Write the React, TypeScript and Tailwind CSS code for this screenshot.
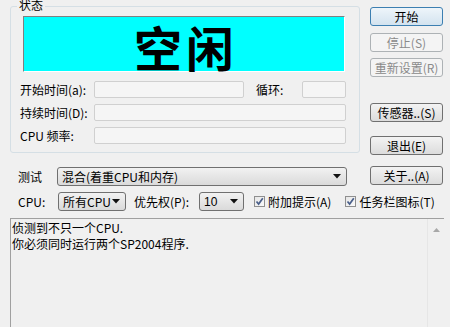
import React from "react";

const font = { fontFamily: "'Noto Sans CJK SC', 'Liberation Sans', sans-serif" };

function Btn({ children, disabled, primary }: { children: React.ReactNode; disabled?: boolean; primary?: boolean }) {
  const cls = disabled
    ? "border-[#adb2b5] text-[#8a8a8a] bg-[#f4f4f4]"
    : primary
    ? "border-[#3c7fb1] text-black bg-gradient-to-b from-[#eef5fa] to-[#d3e3ef]"
    : "border-[#707070] text-black bg-gradient-to-b from-[#f3f3f3] to-[#dcdcdc]";
  return (
    <div className={`w-[73px] h-[19px] border rounded-[3px] flex items-center justify-center text-[12px] leading-none ${cls}`}>
      {children}
    </div>
  );
}

function Combo({ w, children, sans }: { w: string; children: React.ReactNode; sans?: boolean }) {
  return (
    <div className={`${w} h-[19px] border border-[#707070] rounded-[3px] bg-gradient-to-b from-[#f2f2f2] to-[#dadada] flex items-center pl-[4px] pr-[5px]`}>
      <span className={`flex-1 text-[12px] leading-none whitespace-nowrap ${sans ? "font-['Liberation_Sans']" : ""}`}>{children}</span>
      <svg width="8" height="5" viewBox="0 0 8 5" className="shrink-0"><path d="M0 0H8L4 4.5Z" fill="#111" /></svg>
    </div>
  );
}

function Check({ label }: { label: string }) {
  return (
    <div className="flex items-center gap-[3px]">
      <div className="w-[11px] h-[11px] border border-[#8f8f8f] bg-gradient-to-br from-[#e6e6e6] to-[#fafafa] flex items-center justify-center">
        <svg width="9" height="9" viewBox="0 0 9 9"><path d="M1.5 4.5L3.6 7L7.8 1.2" stroke="#4a5f8a" strokeWidth="1.7" fill="none" /></svg>
      </div>
      <span className="text-[12px] leading-none whitespace-nowrap">{label}</span>
    </div>
  );
}

function Field({ w }: { w: string }) {
  return <div className={`${w} h-[17px] border border-[#d0d0d0] bg-[#f5f5f5] rounded-[2px]`} />;
}

export default function App() {
  return (
    <div style={font} className="w-[450px] h-[327px] bg-[#f0f0f0] text-black text-[12px] overflow-hidden flex flex-col">
      <div className="flex h-[186px]">
        <div className="w-[360px] pl-[10px] flex flex-col">
          <div className="relative mt-[6px] h-[147px] border border-[#d5dfe5] rounded-[3px] flex flex-col">
            <div className="absolute top-[-9px] left-[6px] px-[2px] bg-[#f0f0f0] text-[12px] leading-[14px]">状态</div>
            <div className="ml-[12px] mt-[9px] w-[322px] h-[56px] bg-[#00ffff] border-t border-l border-[#808080] border-b border-r border-b-white border-r-white flex items-center justify-center">
              <span className="text-[48px] font-bold leading-none tracking-[4px] mt-[4px] pl-[4px]">空闲</span>
            </div>
            <div className="mt-[9px] pl-[9px] flex items-center h-[17px]">
              <span className="w-[74px] whitespace-nowrap">开始时间(a):</span>
              <Field w="w-[150px]" />
              <span className="ml-[12px] w-[46px]">循环:</span>
              <Field w="w-[44px]" />
            </div>
            <div className="mt-[6px] pl-[9px] flex items-center h-[17px]">
              <span className="w-[74px] whitespace-nowrap">持续时间(D):</span>
              <Field w="w-[252px]" />
            </div>
            <div className="mt-[6px] pl-[9px] flex items-center h-[17px]">
              <span className="w-[74px] whitespace-nowrap">CPU 频率:</span>
              <Field w="w-[252px]" />
            </div>
          </div>
          <div className="mt-[14px] flex items-center h-[19px]">
            <span className="ml-[8px] w-[39px]">测试</span>
            <Combo w="w-[290px]">混合(着重CPU和内存)</Combo>
          </div>
        </div>
        <div className="pl-[10px] flex flex-col">
          <div className="mt-[7px]"><Btn primary>开始</Btn></div>
          <div className="mt-[7px]"><Btn disabled>停止(S)</Btn></div>
          <div className="mt-[6px]"><Btn disabled>重新设置(R)</Btn></div>
          <div className="mt-[26px]"><Btn>传感器..(S)</Btn></div>
          <div className="mt-[14px]"><Btn>退出(E)</Btn></div>
          <div className="mt-[11px]"><Btn>关于..(A)</Btn></div>
        </div>
      </div>
      <div className="mt-[6px] h-[19px] flex items-center pl-[18px]">
        <span className="w-[40px]">CPU:</span>
        <Combo w="w-[68px]">所有CPU</Combo>
        <span className="ml-[8px] w-[65px] whitespace-nowrap">优先权(P):</span>
        <Combo w="w-[45px]" sans>10</Combo>
        <div className="ml-[10px]"><Check label="附加提示(A)" /></div>
        <div className="ml-[14px]"><Check label="任务栏图标(T)" /></div>
      </div>
      <div className="mt-[7px] ml-[10px] mr-[6px] flex-1 border-t border-l border-[#a0a0a0] flex">
        <div className="flex-1 pl-[1px] pt-[1px] text-[12px] leading-[16px]">
          <div>侦测到不只一个CPU.</div>
          <div>你必须同时运行两个SP2004程序.</div>
        </div>
        <div className="w-[17px] bg-[#f0f0f0] border-l border-[#e6e6e6] flex justify-center pt-[9px]">
          <svg width="7" height="4" viewBox="0 0 7 4"><path d="M0 4L3.5 0L7 4Z" fill="#a8a8a8" /></svg>
        </div>
      </div>
    </div>
  );
}
